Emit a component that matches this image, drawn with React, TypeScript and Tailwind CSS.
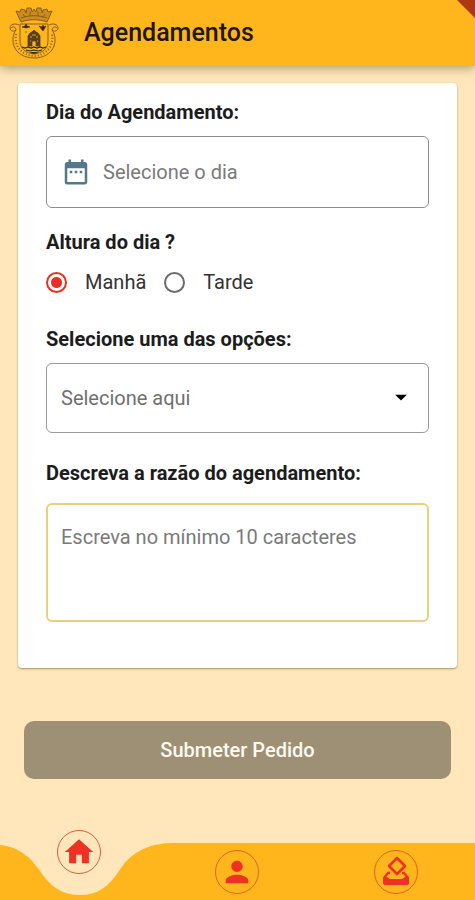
import { useState } from 'react';
import { MdArrowDropDown, MdDateRange, MdHome, MdPerson } from 'react-icons/md';

const periods = ['Manhã', 'Tarde'];

function Crest() {
  return (
    <svg viewBox="0 0 52 56" className="h-14 w-13 shrink-0" fill="none" stroke="#8a5c1e" aria-hidden="true">
      {/* mural crown */}
      <path
        d="M13 17 8 6l4 1 1-3 4 1 1 3 1-5h4l1 4 2-3 2 3 1-4h4l1 5 1-3 4-1 1 3 4-1-5 11c-8-3-18-3-26 0z"
        fill="#8a5c1e"
        fillOpacity="0.45"
        strokeWidth="1"
      />
      <path d="M13 13c8-3 18-3 26 0M15 9l2 3M22 7v4M30 7v4M37 9l-2 3" strokeWidth="1" />
      {/* shield */}
      <path d="M12 19h28v17c0 8-6 12-14 13-8-1-14-5-14-13z" strokeWidth="1" />
      {/* motto scroll */}
      <path d="M11 20c-4-2-9-1-9 3 0 3 4 4 6 2-3 4-4 10-2 16 3 8 11 12 20 12s17-4 20-12c2-6 1-12-2-16 2 2 6 1 6-2 0-4-5-5-9-3" strokeWidth="1" />
      <path d="M8 29c-2 13 6 21 18 22 12-1 20-9 18-22" strokeWidth="2" strokeDasharray="1 2" />
      <path d="M3 23c2-2 5-1 5 2M49 23c-2-2-5-1-5 2" strokeWidth="1" />
      {/* tower */}
      <path d="M20 41V31l2-3 2-1 2-2 2 2 2 1 2 3v10h-4v-5h-4v5z" fill="#59401c" stroke="#59401c" strokeWidth="0.8" />
      <path d="M22 32h2M28 32h2M22 36h1M29 36h1M25 29v2M27 29v2" stroke="#e5a225" strokeWidth="1" />
      {/* birds */}
      <path d="m14 22 3-1 1-2 1 2 3 1-4 1zM31 21l3 1 1-2 1 2 2-1-3 5zM17 27h2" fill="#3a2810" stroke="#3a2810" strokeWidth="0.6" />
      {/* sea */}
      <path d="m14 42 3 1 3-1 3 1 3-1 3 1 3-1 3 1 3-1M18 45l4 1 4-1 4 1 4-1" stroke="#2f210f" strokeWidth="1.2" />
      <path d="M21 47h10l-5 2z" fill="#3a2810" stroke="none" />
    </svg>
  );
}

function BallotIcon() {
  return (
    <svg viewBox="0 0 26 32" className="h-8 w-[26px]" fill="none" stroke="currentColor" aria-hidden="true">
      <path d="m14 2 8 8-8 8-8-8z" strokeWidth="2.6" strokeLinejoin="round" />
      <path d="M7 17H5l-4 5M19 17h2l4 5" strokeWidth="2.4" />
      <path d="M0 21h4l3 2h12l3-2h4v6a2 2 0 0 1-2 2H2a2 2 0 0 1-2-2z" fill="currentColor" stroke="none" />
    </svg>
  );
}

export default function App() {
  const [period, setPeriod] = useState('Manhã');

  return (
    <div className="relative flex min-h-screen flex-col overflow-hidden bg-[#ffe7bb] font-['Roboto',sans-serif] text-[#1c1c1c]">
      <header className="z-10 flex h-[66px] items-center gap-6 bg-[#ffb61c] pl-2 shadow-[0_2px_10px_rgba(90,70,30,0.5)]">
        <Crest />
        <h1 className="text-[25px] font-medium text-[#1f1603]">Agendamentos</h1>
      </header>
      {/* corner ribbon */}
      <svg viewBox="0 0 18 18" className="absolute top-0 right-0 z-20 size-[18px]" aria-hidden="true">
        <path d="M0 0h18v18z" fill="#ad3812" />
      </svg>

      <main className="flex flex-1 flex-col">
        <form onSubmit={(e) => e.preventDefault()}>
          <div className="mx-[18px] mt-[17px] rounded bg-white px-7 pt-[17px] pb-[46px] shadow-[0_1px_2px_rgba(80,60,20,0.5)]">
            <label htmlFor="day" className="block text-xl leading-6 font-bold">
              Dia do Agendamento:
            </label>
            <div className="mt-3 flex h-[72px] items-center gap-3 rounded-md border border-[#8c8c8c] px-3.5">
              <MdDateRange className="size-[30px] shrink-0 text-[#55788a]" />
              <input
                id="day"
                type="text"
                placeholder="Selecione o dia"
                className="w-full min-w-0 bg-transparent text-xl outline-none placeholder:text-[#7a7a7a]"
              />
            </div>

            <fieldset className="mt-[22px]">
              <legend className="text-xl leading-6 font-bold">Altura do dia ?</legend>
              <div className="mt-4 flex gap-[18px]">
                {periods.map((name) => (
                  <label key={name} className="flex h-6 items-center gap-[18px] text-xl text-[#333]">
                    <input
                      type="radio"
                      name="period"
                      value={name}
                      checked={period === name}
                      onChange={() => setPeriod(name)}
                      className="size-[21px] shrink-0 appearance-none rounded-full border-2 border-[#6b6b6b] checked:border-[#e92f25] checked:bg-[radial-gradient(circle,#e92f25_5px,#fff_6px)]"
                    />
                    {name}
                  </label>
                ))}
              </div>
            </fieldset>

            <label htmlFor="option" className="mt-[33px] block text-xl leading-6 font-bold">
              Selecione uma das opções:
            </label>
            <div className="relative mt-3">
              <select
                id="option"
                defaultValue=""
                className="h-[70px] w-full appearance-none rounded-md border border-[#9a9a9a] bg-white px-3.5 text-xl text-[#707070] outline-none"
              >
                <option value="">Selecione aqui</option>
              </select>
              <MdArrowDropDown className="pointer-events-none absolute top-5 right-3.5 size-7 text-black" />
            </div>

            <label htmlFor="reason" className="mt-7 block text-xl leading-6 font-bold">
              Descreva a razão do agendamento:
            </label>
            <textarea
              id="reason"
              placeholder="Escreva no mínimo 10 caracteres"
              className="mt-[18px] block h-[119px] w-full resize-none rounded-md border-2 border-[#ead07c] px-[13px] py-[18px] text-xl outline-none placeholder:text-[#7a7a7a]"
            />
          </div>

          <div className="mt-[53px] px-6">
            <button type="submit" className="h-[58px] w-full rounded-[10px] bg-[#9e9075] text-xl font-medium text-[#fffaf0]">
              Submeter Pedido
            </button>
          </div>
        </form>
      </main>

      <nav className="relative h-[57px]">
        <svg viewBox="0 0 475 57" preserveAspectRatio="none" className="absolute inset-0 size-full" aria-hidden="true">
          <path d="M0 2C20 4 31 15 40 28C51 44 62 52 80 52C98 52 108 44 119 28C129 11 147 0 173 0H475V57H0z" fill="#ffb61c" />
        </svg>
        <div className="relative grid grid-cols-3 items-start justify-items-center">
          <a href="#home" aria-label="Início" className="-mt-[13px] flex size-11 items-center justify-center rounded-full border border-[#cf5f45] text-[#ee3123]">
            <MdHome className="size-[34px]" />
          </a>
          <a href="#profile" aria-label="Perfil" className="mt-[7px] flex size-11 items-center justify-center rounded-full border border-[#df6514] text-[#ee3123]">
            <MdPerson className="size-[34px]" />
          </a>
          <a href="#vote" aria-label="Votar" className="mt-[7px] flex size-11 items-center justify-center rounded-full border border-[#df6514] text-[#ee3123]">
            <BallotIcon />
          </a>
        </div>
      </nav>
    </div>
  );
}
